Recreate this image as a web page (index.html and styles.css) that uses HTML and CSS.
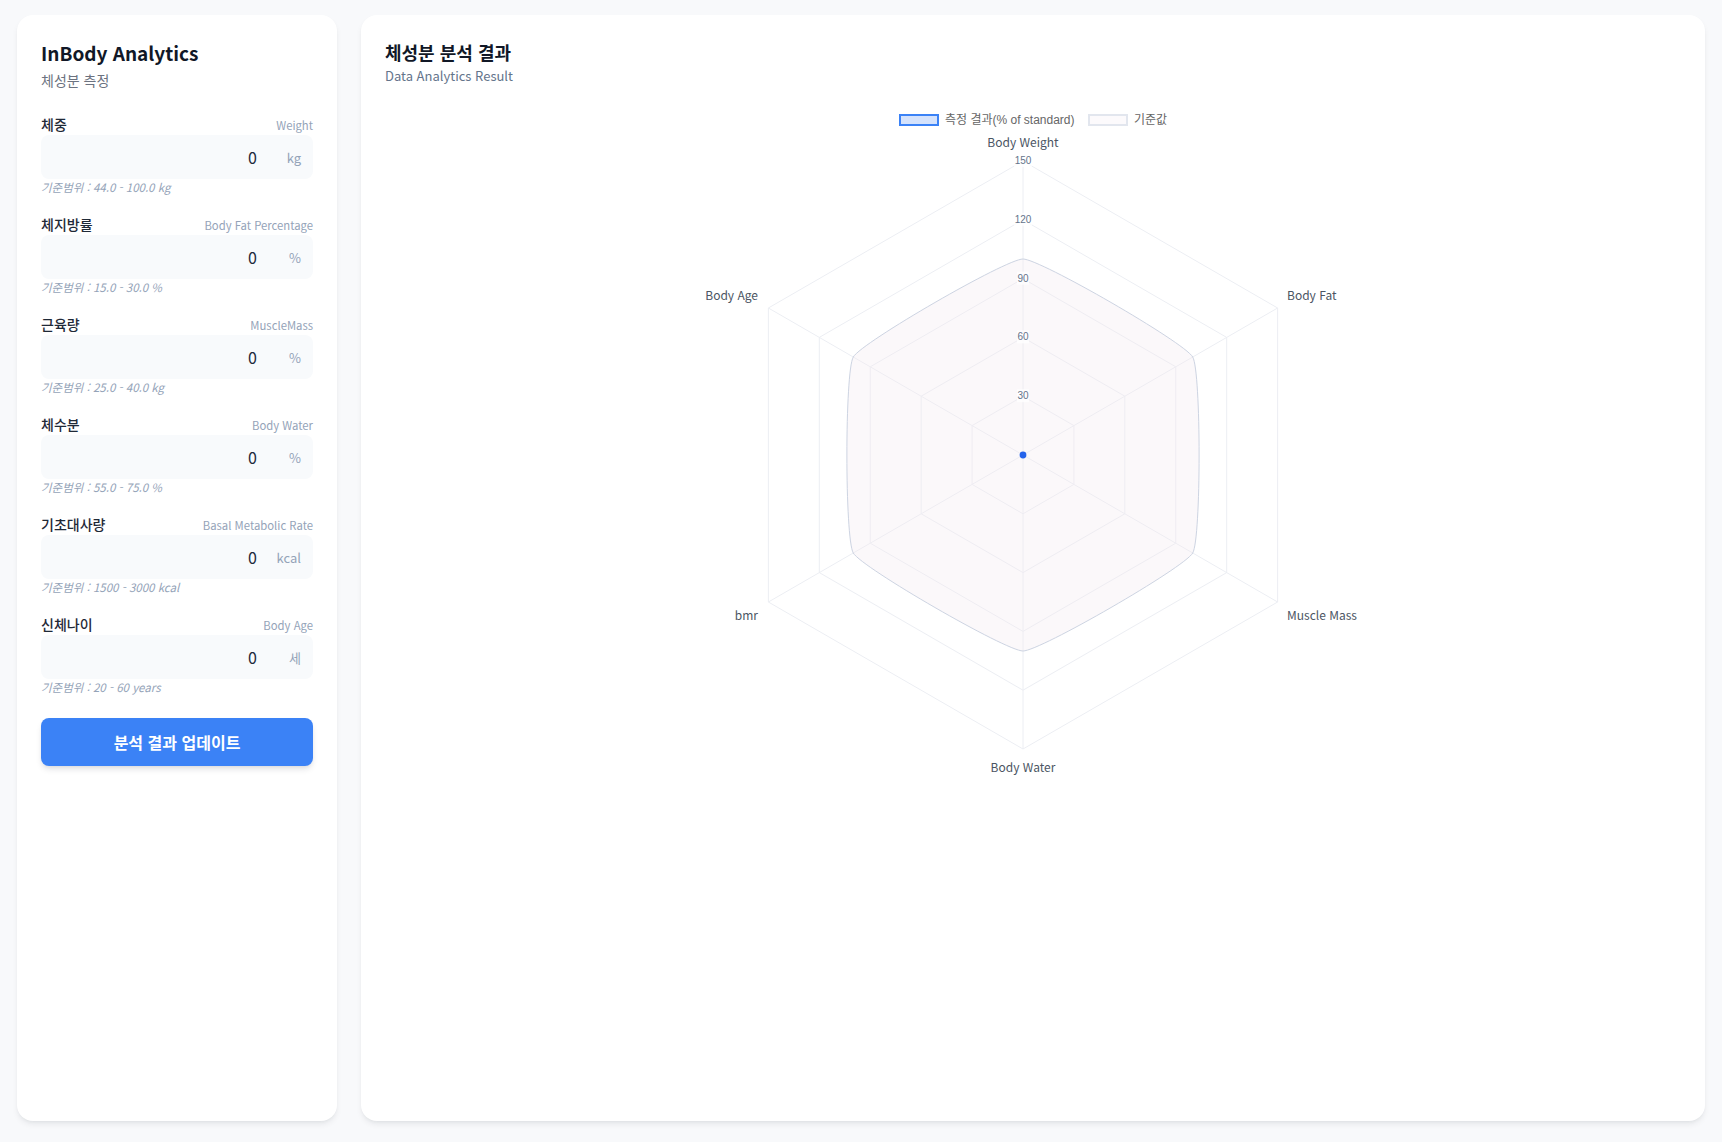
FILE: index.html
```html
<!DOCTYPE html>
<html lang="ko">
<head>
<meta charset="utf-8">
<title>InBody Analytics</title>
<link rel="stylesheet" href="styles.css">
</head>
<body>
<div class="layout">
  <aside class="panel side">
    <header class="side-head">
      <h1 class="side-title">InBody Analytics</h1>
      <p class="side-sub">체성분 측정</p>
    </header>
    <div class="fields">
      <div class="field">
        <div class="field-label"><span class="lbl">체중</span><span class="lbl-en">Weight</span></div>
        <div class="field-box"><input class="field-input" type="text" value="0"><span class="unit">kg</span></div>
        <div class="range">기준범위 : 44.0 - 100.0 kg</div>
      </div>
      <div class="field">
        <div class="field-label"><span class="lbl">체지방률</span><span class="lbl-en">Body Fat Percentage</span></div>
        <div class="field-box"><input class="field-input" type="text" value="0"><span class="unit">%</span></div>
        <div class="range">기준범위 : 15.0 - 30.0 %</div>
      </div>
      <div class="field">
        <div class="field-label"><span class="lbl">근육량</span><span class="lbl-en">MuscleMass</span></div>
        <div class="field-box"><input class="field-input" type="text" value="0"><span class="unit">%</span></div>
        <div class="range">기준범위 : 25.0 - 40.0 kg</div>
      </div>
      <div class="field">
        <div class="field-label"><span class="lbl">체수분</span><span class="lbl-en">Body Water</span></div>
        <div class="field-box"><input class="field-input" type="text" value="0"><span class="unit">%</span></div>
        <div class="range">기준범위 : 55.0 - 75.0 %</div>
      </div>
      <div class="field">
        <div class="field-label"><span class="lbl">기초대사량</span><span class="lbl-en">Basal Metabolic Rate</span></div>
        <div class="field-box"><input class="field-input" type="text" value="0"><span class="unit">kcal</span></div>
        <div class="range">기준범위 : 1500 - 3000 kcal</div>
      </div>
      <div class="field">
        <div class="field-label"><span class="lbl">신체나이</span><span class="lbl-en">Body Age</span></div>
        <div class="field-box"><input class="field-input" type="text" value="0"><span class="unit">세</span></div>
        <div class="range">기준범위 : 20 - 60 years</div>
      </div>
    </div>
    <button class="update-btn" type="button">분석 결과 업데이트</button>
  </aside>

  <main class="panel result">
    <header class="result-head">
      <h2 class="result-title">체성분 분석 결과</h2>
      <p class="result-sub">Data Analytics Result</p>
    </header>
    <div class="chart-wrap">
      <svg class="chart" width="1296" height="720" viewBox="0 0 1296 720" xmlns="http://www.w3.org/2000/svg">
        <!-- legend -->
        <rect class="lg-box1" x="515" y="19" width="38" height="10"/>
        <text class="legend-text" x="560" y="28">측정 결과(% of standard)</text>
        <rect class="lg-box2" x="704" y="19" width="38" height="10"/>
        <text class="legend-text" x="749" y="28">기준값</text>

        <!-- grid -->
        <g class="grid">
          <polygon points="638,65 892.61,212 892.61,506 638,653 383.39,506 383.39,212"/>
          <polygon points="638,123.8 841.69,241.4 841.69,476.6 638,594.2 434.31,476.6 434.31,241.4"/>
          <polygon points="638,182.6 790.77,270.8 790.77,447.2 638,535.4 485.23,447.2 485.23,270.8"/>
          <polygon points="638,241.4 739.84,300.2 739.84,417.8 638,476.6 536.16,417.8 536.16,300.2"/>
          <polygon points="638,300.2 688.92,329.6 688.92,388.4 638,417.8 587.08,388.4 587.08,329.6"/>
          <line x1="638" y1="359" x2="638" y2="65"/>
          <line x1="638" y1="359" x2="892.61" y2="212"/>
          <line x1="638" y1="359" x2="892.61" y2="506"/>
          <line x1="638" y1="359" x2="638" y2="653"/>
          <line x1="638" y1="359" x2="383.39" y2="506"/>
          <line x1="638" y1="359" x2="383.39" y2="212"/>
        </g>

        <!-- standard dataset -->
        <path class="std-area" d="M638,163 C654.97,163 799.25,246.3 807.74,261 C816.23,275.7 816.23,442.3 807.74,457 C799.25,471.7 654.97,555 638,555 C621.03,555 476.75,471.7 468.26,457 C459.77,442.3 459.77,275.7 468.26,261 C476.75,246.3 621.03,163 638,163 Z"/>

        <!-- ticks -->
        <g class="ticks">
          <rect class="tick-bg" x="629" y="58" width="18" height="13"/>
          <text x="638" y="68">150</text>
          <rect class="tick-bg" x="629" y="116.8" width="18" height="13"/>
          <text x="638" y="126.8">120</text>
          <rect class="tick-bg" x="632" y="175.6" width="12" height="13"/>
          <text x="638" y="185.6">90</text>
          <rect class="tick-bg" x="632" y="234.4" width="12" height="13"/>
          <text x="638" y="244.4">60</text>
          <rect class="tick-bg" x="632" y="293.2" width="12" height="13"/>
          <text x="638" y="303.2">30</text>
        </g>

        <!-- measured dataset (all zero) -->
        <circle class="pt" cx="638" cy="359" r="3.4"/>

        <!-- point labels -->
        <g class="plabels">
          <text x="638" y="51" text-anchor="middle">Body Weight</text>
          <text x="902" y="203.5" text-anchor="start">Body Fat</text>
          <text x="902" y="524" text-anchor="start">Muscle Mass</text>
          <text x="638" y="676" text-anchor="middle">Body Water</text>
          <text x="373" y="524" text-anchor="end">bmr</text>
          <text x="373" y="203.5" text-anchor="end">Body Age</text>
        </g>
      </svg>
    </div>
  </main>
</div>
</body>
</html>
```

FILE: styles.css
```css
* { box-sizing: border-box; }

html, body {
  margin: 0;
  padding: 0;
}

body {
  background: #f8f9fb;
  font-family: "Noto Sans CJK KR", "Noto Sans", sans-serif;
  color: #1f2937;
}

.layout {
  display: flex;
  gap: 24px;
  height: 1142px;
  padding: 15px 17px 21px 17px;
}

.panel {
  background: #ffffff;
  border-radius: 16px;
  box-shadow: 0 4px 6px -1px rgba(15, 23, 42, 0.08), 0 2px 4px -2px rgba(15, 23, 42, 0.06);
}

.side {
  width: 320px;
  flex: none;
  padding: 24px;
  display: flex;
  flex-direction: column;
}

.side-head {
  margin-bottom: 24px;
}

.side-title {
  margin: 0;
  font-size: 19px;
  line-height: 28px;
  font-weight: 700;
  color: #111827;
}

.side-sub {
  margin: 3px 0 0 0;
  font-size: 14px;
  line-height: 20px;
  color: #6b7280;
}

.fields {
  display: flex;
  flex-direction: column;
  gap: 19px;
}

.field-label {
  display: flex;
  justify-content: space-between;
  align-items: baseline;
  height: 20px;
  line-height: 20px;
  margin-bottom: 1px;
}

.lbl {
  font-size: 14px;
  font-weight: 500;
  color: #1f2937;
}

.lbl-en {
  font-size: 11.3px;
  color: #94a3b8;
}

.field-box {
  display: flex;
  align-items: center;
  height: 44px;
  background: #f8fafc;
  border-radius: 8px;
  padding: 0 12px;
}

.field-input {
  flex: 1;
  min-width: 0;
  border: none;
  background: transparent;
  outline: none;
  text-align: right;
  font-family: inherit;
  font-size: 16px;
  color: #1e293b;
  padding: 0;
  margin-right: 14px;
}

.unit {
  width: 30px;
  text-align: right;
  font-size: 13px;
  color: #94a3b8;
}

.range {
  font-size: 11.5px;
  line-height: 16px;
  font-style: italic;
  color: #94a3b8;
}

.update-btn {
  margin-top: 23px;
  height: 48px;
  width: 100%;
  border: none;
  border-radius: 8px;
  background: #3b82f6;
  color: #ffffff;
  font-family: inherit;
  font-size: 16px;
  font-weight: 700;
  box-shadow: 0 4px 6px -1px rgba(15, 23, 42, 0.12), 0 2px 4px -2px rgba(15, 23, 42, 0.08);
  cursor: pointer;
}

.result {
  flex: 1;
  padding: 24px;
}

.result-title {
  margin: 0;
  font-size: 18px;
  line-height: 27px;
  font-weight: 700;
  color: #111827;
}

.result-sub {
  margin: 0;
  font-size: 13px;
  line-height: 20px;
  color: #64748b;
}

.chart-wrap {
  margin-top: 10px;
}

.chart {
  display: block;
}

.legend-text {
  font-family: "Liberation Sans", "Noto Sans CJK KR", sans-serif;
  font-size: 12px;
  fill: #666666;
}

.lg-box1 {
  fill: #d4e2fc;
  stroke: #3b82f6;
  stroke-width: 2;
}

.lg-box2 {
  fill: #fcfafc;
  stroke: #e2e6ee;
  stroke-width: 2;
}

.grid polygon,
.grid line {
  fill: none;
  stroke: #eceef3;
  stroke-width: 1;
}

.std-area {
  fill: rgba(244, 236, 242, 0.35);
  stroke: #cdd4e2;
  stroke-width: 1;
}

.ticks text {
  font-family: "Liberation Sans", sans-serif;
  font-size: 10px;
  fill: #64748b;
  text-anchor: middle;
}

.tick-bg {
  fill: rgba(255, 255, 255, 0.75);
}

.pt {
  fill: #2563eb;
}

.plabels text {
  font-family: "Noto Sans CJK KR", "Noto Sans", sans-serif;
  font-size: 12px;
  fill: #4b5563;
}
```
